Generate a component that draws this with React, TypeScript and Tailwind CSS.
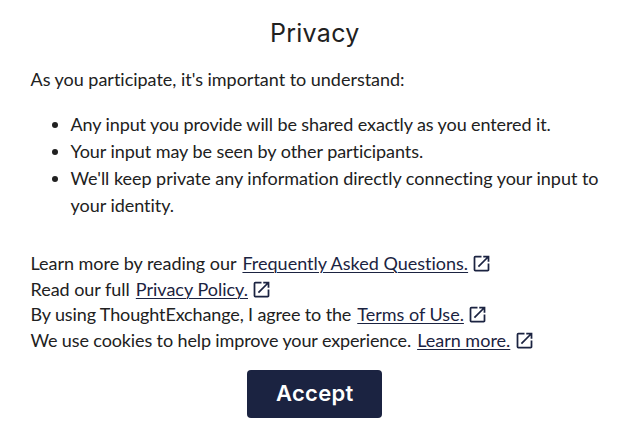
import { MdOpenInNew } from 'react-icons/md'

interface Notice {
  text: string
  tracking: string
}

interface LegalLine extends Notice {
  link: string
}

const notices: Notice[] = [
  { text: 'Any input you provide will be shared exactly as you entered it.', tracking: 'tracking-[-0.1px]' },
  { text: 'Your input may be seen by other participants.', tracking: 'tracking-[-0.06px]' },
  {
    text: "We'll keep private any information directly connecting your input to your identity.",
    tracking: 'tracking-[-0.03px]',
  },
]

const legalLines: LegalLine[] = [
  { text: 'Learn more by reading our', link: 'Frequently Asked Questions.', tracking: 'tracking-[-0.03px]' },
  { text: 'Read our full', link: 'Privacy Policy.', tracking: 'tracking-[-0.03px]' },
  { text: 'By using ThoughtExchange, I agree to the', link: 'Terms of Use.', tracking: 'tracking-[-0.13px]' },
  { text: 'We use cookies to help improve your experience.', link: 'Learn more.', tracking: 'tracking-[-0.12px]' },
]

function ExternalLink({ label }: { label: string }) {
  return (
    <a href="#" className="ml-[6px] inline-flex items-center text-[#1b2341]">
      <span className="underline decoration-1 underline-offset-[2px]">{label}</span>
      <MdOpenInNew className="ml-[3.4px] h-[21px] w-[21px]" />
    </a>
  )
}

export default function App() {
  return (
    <div className="flex h-[442px] w-[631px] flex-col bg-white pr-[30px] pl-[30.5px] font-['Lato',sans-serif] text-[18px] text-[#212121] [font-variant-ligatures:none]">
      <h1 className="mt-[15px] mr-[2px] text-center font-['Inter',sans-serif] text-[25px] leading-[36px] tracking-[0.3px]">
        Privacy
      </h1>

      <p className="mt-[15px] leading-[27px] tracking-[-0.02px]">As you participate, it's important to understand:</p>

      <ul className="mt-[18px] list-disc pl-[40px] leading-[27px]">
        {notices.map((notice) => (
          <li key={notice.text} className={notice.tracking}>
            {notice.text}
          </li>
        ))}
      </ul>

      {/* Legal links */}
      <div className="mt-[31.55px]">
        {legalLines.map((line) => (
          <p key={line.link} className="flex h-[25.65px] items-center whitespace-nowrap">
            <span className={line.tracking}>{line.text}</span>
            <ExternalLink label={line.link} />
          </p>
        ))}
      </div>

      <button className="mt-[16.85px] mr-[2px] h-[48px] w-[135px] self-center rounded-[4px] bg-[#1b2341] font-['Inter',sans-serif] text-[22px] font-semibold tracking-[0.3px] text-white">
        Accept
      </button>
    </div>
  )
}
